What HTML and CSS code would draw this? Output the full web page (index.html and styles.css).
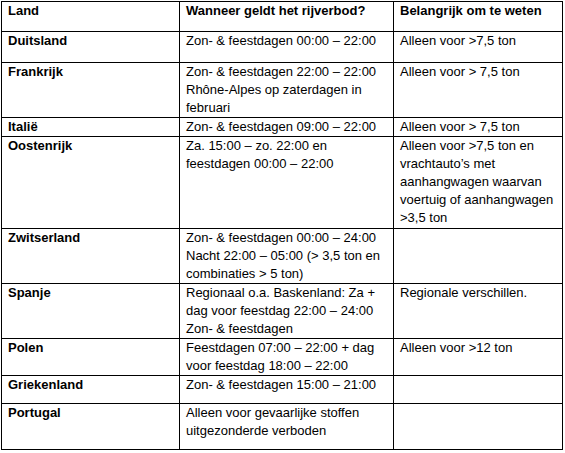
FILE: index.html
```html
<!DOCTYPE html>
<html lang="nl">
<head>
<meta charset="utf-8">
<title>Rijverboden</title>
<link rel="stylesheet" href="styles.css">
</head>
<body>
<table class="rules">
  <colgroup>
    <col class="c-land">
    <col class="c-when">
    <col class="c-note">
  </colgroup>
  <tr class="r-head">
    <th>Land</th>
    <th>Wanneer geldt het rijverbod?</th>
    <th>Belangrijk om te weten</th>
  </tr>
  <tr class="r-31">
    <th>Duitsland</th>
    <td>Zon- &amp; feestdagen 00:00 – 22:00</td>
    <td>Alleen voor &gt;7,5 ton</td>
  </tr>
  <tr class="r-55">
    <th>Frankrijk</th>
    <td>Zon- &amp; feestdagen 22:00 – 22:00<br>Rhône-Alpes op zaterdagen in<br>februari</td>
    <td>Alleen voor &gt; 7,5 ton</td>
  </tr>
  <tr class="r-19">
    <th>Italië</th>
    <td>Zon- &amp; feestdagen 09:00 – 22:00</td>
    <td>Alleen voor &gt; 7,5 ton</td>
  </tr>
  <tr class="r-92">
    <th>Oostenrijk</th>
    <td>Za. 15:00 – zo. 22:00 en<br>feestdagen 00:00 – 22:00</td>
    <td>Alleen voor &gt;7,5 ton en<br>vrachtauto’s met<br>aanhangwagen waarvan<br>voertuig of aanhangwagen<br>&gt;3,5 ton</td>
  </tr>
  <tr class="r-55">
    <th>Zwitserland</th>
    <td>Zon- &amp; feestdagen 00:00 – 24:00<br>Nacht 22:00 – 05:00 (&gt; 3,5 ton en<br>combinaties &gt; 5 ton)</td>
    <td></td>
  </tr>
  <tr class="r-55">
    <th>Spanje</th>
    <td>Regionaal o.a. Baskenland: Za +<br>dag voor feestdag 22:00 – 24:00<br>Zon- &amp; feestdagen</td>
    <td>Regionale verschillen.</td>
  </tr>
  <tr class="r-37">
    <th>Polen</th>
    <td>Feestdagen 07:00 – 22:00 + dag<br>voor feestdag 18:00 – 22:00</td>
    <td>Alleen voor &gt;12 ton</td>
  </tr>
  <tr class="r-28">
    <th>Griekenland</th>
    <td>Zon- &amp; feestdagen 15:00 – 21:00</td>
    <td></td>
  </tr>
  <tr class="r-46">
    <th>Portugal</th>
    <td>Alleen voor gevaarlijke stoffen<br>uitgezonderde verboden</td>
    <td></td>
  </tr>
</table>
</body>
</html>
```

FILE: styles.css
```css
* {
  box-sizing: border-box;
}

html, body {
  background: #ffffff;
}

body {
  margin: 0;
  padding: 1px 0 0 1px;
  font-family: "Liberation Sans", Arial, sans-serif;
  font-size: 13px;
  line-height: 18px;
  color: #000000;
}

.rules {
  table-layout: fixed;
  width: 562px;
  border-collapse: separate;
  border-spacing: 0;
  border-top: 1px solid #000;
  border-left: 1px solid #000;
}

.c-land { width: 178px; }
.c-when { width: 214px; }
.c-note { width: 169px; }

.rules th,
.rules td {
  border-right: 1px solid #000;
  border-bottom: 1px solid #000;
  padding: 0 6px;
  vertical-align: top;
  text-align: left;
  white-space: nowrap;
  font-weight: 400;
}

.rules th {
  font-weight: 700;
}

.r-head { height: 30px; }
.r-19 { height: 19px; }
.r-28 { height: 28px; }
.r-31 { height: 31px; }
.r-37 { height: 37px; }
.r-46 { height: 46px; }
.r-55 { height: 55px; }
.r-92 { height: 92px; }
```
